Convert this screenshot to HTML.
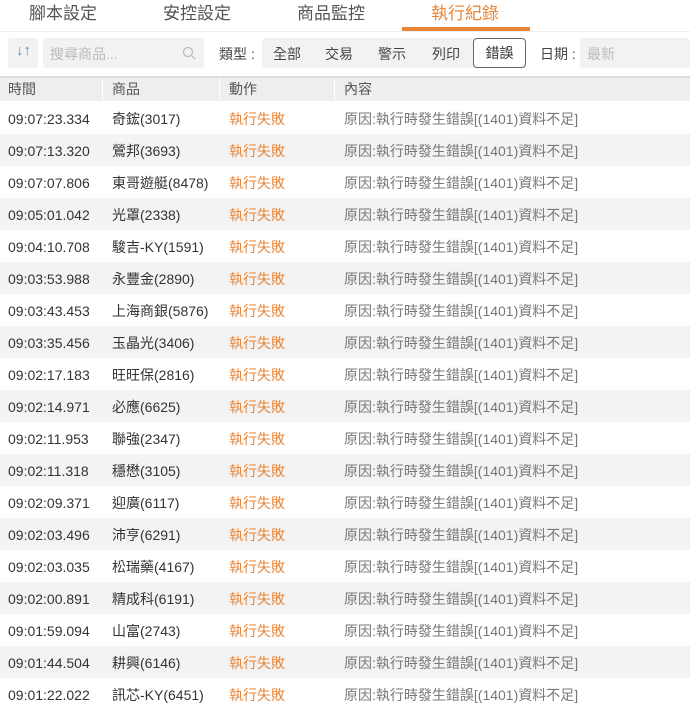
<!DOCTYPE html><html><head><meta charset="utf-8"><style>
*{margin:0;padding:0;box-sizing:border-box}
body{width:690px;height:711px;overflow:hidden;background:#fff;font-family:"Liberation Sans","Noto Sans CJK TC",sans-serif;color:#333}
.tabs{position:absolute;top:0;left:0;width:690px;height:32px;border-bottom:1px solid #eee}
.tab{position:absolute;top:0;line-height:28px;font-size:17px;color:#555}
.tab.on{color:#e8873a}
.ul{position:absolute;left:402px;top:27px;width:128px;height:4px;background:#e8873a}
.tb{position:absolute;top:38px;height:30px;background:#f2f2f2;border-radius:3px}
.lbl,.opt{position:absolute;top:39px;line-height:30px;font-size:14px;color:#444}
.hdr{position:absolute;top:76px;left:0;width:690px;height:25px;background:#eee;border-top:2px solid #ddd;font-size:14px;color:#555}
.hdr span{position:absolute;top:0;line-height:23px}
.sep{position:absolute;top:0;width:1px;height:23px;background:#fff}
.row{position:absolute;left:0;width:690px;height:32px;font-size:14px}
.row span{position:absolute;top:1px;line-height:32px}
.g{background:#f3f3f3}
.a{color:#e8873a}.c{color:#777}
</style></head><body>
<div class="tabs">
<div class="tab" style="left:29px">腳本設定</div>
<div class="tab" style="left:163px">安控設定</div>
<div class="tab" style="left:297px">商品監控</div>
<div class="tab on" style="left:431px">執行紀錄</div>
<div class="ul"></div></div>
<div class="tb" style="left:8px;width:30px"><span style="position:absolute;left:8px;top:4px;font-size:15px;color:#5a8fd0">↓↑</span></div>
<div class="tb" style="left:43px;width:161px"><span style="position:absolute;left:7px;top:1px;line-height:30px;font-size:14px;color:#bbb">搜尋商品...</span>
<svg style="position:absolute;left:139px;top:8px" width="14" height="14"><circle cx="6" cy="6" r="4.5" fill="none" stroke="#bbb" stroke-width="1.3"/><line x1="9.3" y1="9.3" x2="13" y2="13" stroke="#bbb" stroke-width="1.3"/></svg></div>
<div class="lbl" style="left:219px">類型 :</div>
<div class="tb" style="left:262px;width:264px"></div>
<div class="opt" style="left:273px">全部</div>
<div class="opt" style="left:325px">交易</div>
<div class="opt" style="left:378px">警示</div>
<div class="opt" style="left:432px">列印</div>
<div style="position:absolute;left:473px;top:38px;width:53px;height:30px;border:1px solid #666;border-radius:4px;background:#fff;font-size:14px;text-align:center;line-height:28px;color:#333">錯誤</div>
<div class="lbl" style="left:540px">日期 :</div>
<div class="tb" style="left:580px;width:110px"><span style="position:absolute;left:7px;top:1px;line-height:30px;font-size:14px;color:#bbb">最新</span></div>
<div class="hdr"><span style="left:8px">時間</span><div class="sep" style="left:102px"></div><span style="left:112px">商品</span><div class="sep" style="left:219px"></div><span style="left:229px">動作</span><div class="sep" style="left:334px"></div><span style="left:344px">內容</span></div>
<div id="r"></div>
<script>
var d=[["09:07:23.334","奇鋐(3017)"],["09:07:13.320","鶯邦(3693)"],["09:07:07.806","東哥遊艇(8478)"],["09:05:01.042","光罩(2338)"],["09:04:10.708","駿吉-KY(1591)"],["09:03:53.988","永豐金(2890)"],["09:03:43.453","上海商銀(5876)"],["09:03:35.456","玉晶光(3406)"],["09:02:17.183","旺旺保(2816)"],["09:02:14.971","必應(6625)"],["09:02:11.953","聯強(2347)"],["09:02:11.318","穩懋(3105)"],["09:02:09.371","迎廣(6117)"],["09:02:03.496","沛亨(6291)"],["09:02:03.035","松瑞藥(4167)"],["09:02:00.891","精成科(6191)"],["09:01:59.094","山富(2743)"],["09:01:44.504","耕興(6146)"],["09:01:22.022","訊芯-KY(6451)"]];
var h="";d.forEach(function(x,i){h+='<div class="row'+(i%2?' g':'')+'" style="top:'+(102+i*32)+'px"><span style="left:8px">'+x[0]+'</span><span style="left:112px">'+x[1]+'</span><span class="a" style="left:229px">執行失敗</span><span class="c" style="left:344px">原因:執行時發生錯誤[(1401)資料不足]</span></div>'});
document.getElementById("r").innerHTML=h;
</script>
</body></html>
